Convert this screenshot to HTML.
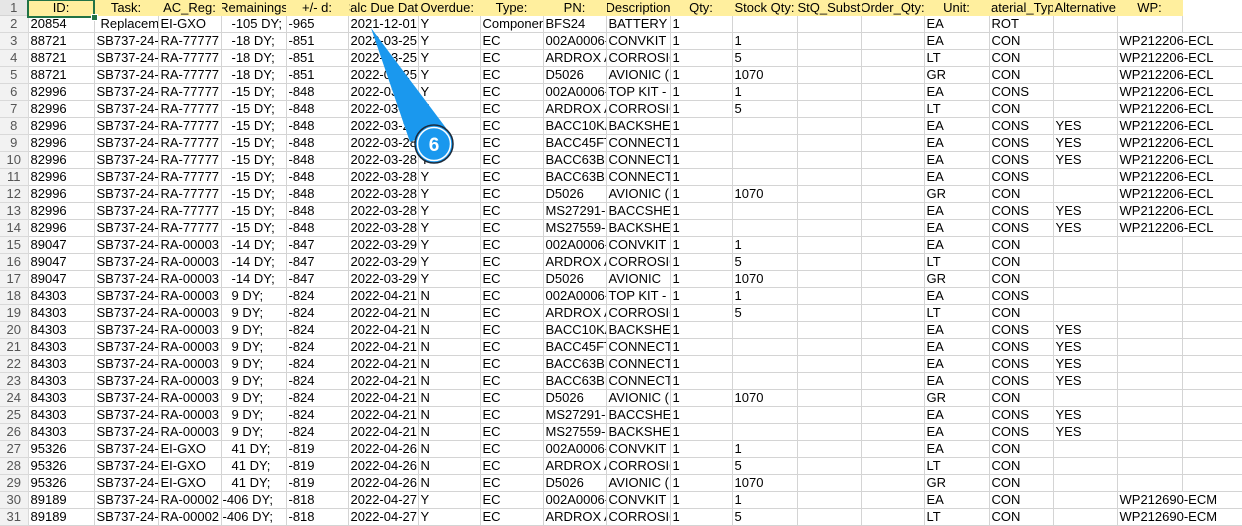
<!DOCTYPE html>
<html><head><meta charset="utf-8"><style>
html,body{margin:0;padding:0;background:#fff;width:1242px;height:526px;overflow:hidden}
table{border-collapse:collapse;table-layout:fixed;width:1242px;font:13px "Liberation Sans",Arial,sans-serif;color:#000;position:absolute;left:0;top:0}
td{height:16px;line-height:16px;padding:0 0 0 2px;border-right:1px solid #d4d4d4;border-bottom:1px solid #d4d4d4;white-space:nowrap;overflow:hidden;text-overflow:clip}
td.n{background:#f2f2f2;color:#555;text-align:center;padding:0;border-color:#d9d9d9}
tr.h td{background:#ffef9e;border-color:#ffef9e;height:15px;line-height:15px;padding:0}
tr.h td.n{background:#e6e6e6;border-color:#d4d4d4}
tr.h td.w{background:#fff;border-color:#fff}
.c{display:flex;justify-content:center;overflow:hidden;white-space:nowrap}
.p{padding-left:10px}
.sel{position:absolute;left:27px;top:-1px;width:64px;height:15px;border:2px solid #217346}
.sel:after{content:"";position:absolute;right:-5px;bottom:-5px;width:5px;height:5px;background:#217346;border:1px solid #fff}
</style></head><body>
<table>
<colgroup><col style="width:28px"><col style="width:66px"><col style="width:64px"><col style="width:63px"><col style="width:65px"><col style="width:62px"><col style="width:70px"><col style="width:62px"><col style="width:63px"><col style="width:63px"><col style="width:64px"><col style="width:62px"><col style="width:65px"><col style="width:64px"><col style="width:63px"><col style="width:65px"><col style="width:64px"><col style="width:64px"><col style="width:65px"><col style="width:60px"></colgroup>
<tr class="h"><td class="n">1</td><td><div class="c">ID:</div></td><td><div class="c">Task:</div></td><td><div class="c">AC_Reg:</div></td><td><div class="c">Remainings</div></td><td><div class="c">+/- d:</div></td><td><div class="c">Calc Due Date</div></td><td style="padding-left:2px">Overdue:</td><td><div class="c">Type:</div></td><td><div class="c">PN:</div></td><td><div class="c">Description</div></td><td><div class="c">Qty:</div></td><td style="padding-left:2px">Stock Qty:</td><td style="padding-left:0">StQ_Subst</td><td><div class="c">Order_Qty:</div></td><td><div class="c">Unit:</div></td><td><div class="c">Material_Type</div></td><td style="padding-left:1px">Alternative:</td><td><div class="c">WP:</div></td><td class="w"></td></tr>
<tr><td class="n">2</td><td>20854</td><td style="padding-left:6px">Replacement</td><td>EI-GXO</td><td class="p">-105 DY;</td><td>-965</td><td>2021-12-01</td><td>Y</td><td>Component</td><td>BFS24</td><td>BATTERY</td><td>1</td><td></td><td></td><td></td><td>EA</td><td>ROT</td><td></td><td></td><td></td></tr>
<tr><td class="n">3</td><td>88721</td><td>SB737-24-</td><td>RA-77777</td><td class="p">-18 DY;</td><td>-851</td><td>2022-03-25</td><td>Y</td><td>EC</td><td>002A0006-</td><td>CONVKIT</td><td>1</td><td>1</td><td></td><td></td><td>EA</td><td>CON</td><td></td><td colspan="2">WP212206-ECL</td></tr>
<tr><td class="n">4</td><td>88721</td><td>SB737-24-</td><td>RA-77777</td><td class="p">-18 DY;</td><td>-851</td><td>2022-03-25</td><td>Y</td><td>EC</td><td>ARDROX A</td><td>CORROSIO</td><td>1</td><td>5</td><td></td><td></td><td>LT</td><td>CON</td><td></td><td colspan="2">WP212206-ECL</td></tr>
<tr><td class="n">5</td><td>88721</td><td>SB737-24-</td><td>RA-77777</td><td class="p">-18 DY;</td><td>-851</td><td>2022-03-25</td><td>Y</td><td>EC</td><td>D5026</td><td>AVIONIC (</td><td>1</td><td>1070</td><td></td><td></td><td>GR</td><td>CON</td><td></td><td colspan="2">WP212206-ECL</td></tr>
<tr><td class="n">6</td><td>82996</td><td>SB737-24-</td><td>RA-77777</td><td class="p">-15 DY;</td><td>-848</td><td>2022-03-28</td><td>Y</td><td>EC</td><td>002A0006-</td><td>TOP KIT -</td><td>1</td><td>1</td><td></td><td></td><td>EA</td><td>CONS</td><td></td><td colspan="2">WP212206-ECL</td></tr>
<tr><td class="n">7</td><td>82996</td><td>SB737-24-</td><td>RA-77777</td><td class="p">-15 DY;</td><td>-848</td><td>2022-03-28</td><td>Y</td><td>EC</td><td>ARDROX A</td><td>CORROSIO</td><td>1</td><td>5</td><td></td><td></td><td>LT</td><td>CON</td><td></td><td colspan="2">WP212206-ECL</td></tr>
<tr><td class="n">8</td><td>82996</td><td>SB737-24-</td><td>RA-77777</td><td class="p">-15 DY;</td><td>-848</td><td>2022-03-28</td><td>Y</td><td>EC</td><td>BACC10KA</td><td>BACKSHE</td><td>1</td><td></td><td></td><td></td><td>EA</td><td>CONS</td><td>YES</td><td colspan="2">WP212206-ECL</td></tr>
<tr><td class="n">9</td><td>82996</td><td>SB737-24-</td><td>RA-77777</td><td class="p">-15 DY;</td><td>-848</td><td>2022-03-28</td><td>Y</td><td>EC</td><td>BACC45FT</td><td>CONNECT</td><td>1</td><td></td><td></td><td></td><td>EA</td><td>CONS</td><td>YES</td><td colspan="2">WP212206-ECL</td></tr>
<tr><td class="n">10</td><td>82996</td><td>SB737-24-</td><td>RA-77777</td><td class="p">-15 DY;</td><td>-848</td><td>2022-03-28</td><td>Y</td><td>EC</td><td>BACC63BI</td><td>CONNECT</td><td>1</td><td></td><td></td><td></td><td>EA</td><td>CONS</td><td>YES</td><td colspan="2">WP212206-ECL</td></tr>
<tr><td class="n">11</td><td>82996</td><td>SB737-24-</td><td>RA-77777</td><td class="p">-15 DY;</td><td>-848</td><td>2022-03-28</td><td>Y</td><td>EC</td><td>BACC63BI</td><td>CONNECT</td><td>1</td><td></td><td></td><td></td><td>EA</td><td>CONS</td><td></td><td colspan="2">WP212206-ECL</td></tr>
<tr><td class="n">12</td><td>82996</td><td>SB737-24-</td><td>RA-77777</td><td class="p">-15 DY;</td><td>-848</td><td>2022-03-28</td><td>Y</td><td>EC</td><td>D5026</td><td>AVIONIC (</td><td>1</td><td>1070</td><td></td><td></td><td>GR</td><td>CON</td><td></td><td colspan="2">WP212206-ECL</td></tr>
<tr><td class="n">13</td><td>82996</td><td>SB737-24-</td><td>RA-77777</td><td class="p">-15 DY;</td><td>-848</td><td>2022-03-28</td><td>Y</td><td>EC</td><td>MS27291-</td><td>BACCSHE</td><td>1</td><td></td><td></td><td></td><td>EA</td><td>CONS</td><td>YES</td><td colspan="2">WP212206-ECL</td></tr>
<tr><td class="n">14</td><td>82996</td><td>SB737-24-</td><td>RA-77777</td><td class="p">-15 DY;</td><td>-848</td><td>2022-03-28</td><td>Y</td><td>EC</td><td>MS27559-</td><td>BACKSHE</td><td>1</td><td></td><td></td><td></td><td>EA</td><td>CONS</td><td>YES</td><td colspan="2">WP212206-ECL</td></tr>
<tr><td class="n">15</td><td>89047</td><td>SB737-24-</td><td>RA-00003</td><td class="p">-14 DY;</td><td>-847</td><td>2022-03-29</td><td>Y</td><td>EC</td><td>002A0006-</td><td>CONVKIT</td><td>1</td><td>1</td><td></td><td></td><td>EA</td><td>CON</td><td></td><td></td><td></td></tr>
<tr><td class="n">16</td><td>89047</td><td>SB737-24-</td><td>RA-00003</td><td class="p">-14 DY;</td><td>-847</td><td>2022-03-29</td><td>Y</td><td>EC</td><td>ARDROX A</td><td>CORROSIO</td><td>1</td><td>5</td><td></td><td></td><td>LT</td><td>CON</td><td></td><td></td><td></td></tr>
<tr><td class="n">17</td><td>89047</td><td>SB737-24-</td><td>RA-00003</td><td class="p">-14 DY;</td><td>-847</td><td>2022-03-29</td><td>Y</td><td>EC</td><td>D5026</td><td>AVIONIC</td><td>1</td><td>1070</td><td></td><td></td><td>GR</td><td>CON</td><td></td><td></td><td></td></tr>
<tr><td class="n">18</td><td>84303</td><td>SB737-24-</td><td>RA-00003</td><td class="p">9 DY;</td><td>-824</td><td>2022-04-21</td><td>N</td><td>EC</td><td>002A0006-</td><td>TOP KIT -</td><td>1</td><td>1</td><td></td><td></td><td>EA</td><td>CONS</td><td></td><td></td><td></td></tr>
<tr><td class="n">19</td><td>84303</td><td>SB737-24-</td><td>RA-00003</td><td class="p">9 DY;</td><td>-824</td><td>2022-04-21</td><td>N</td><td>EC</td><td>ARDROX A</td><td>CORROSIO</td><td>1</td><td>5</td><td></td><td></td><td>LT</td><td>CON</td><td></td><td></td><td></td></tr>
<tr><td class="n">20</td><td>84303</td><td>SB737-24-</td><td>RA-00003</td><td class="p">9 DY;</td><td>-824</td><td>2022-04-21</td><td>N</td><td>EC</td><td>BACC10KA</td><td>BACKSHE</td><td>1</td><td></td><td></td><td></td><td>EA</td><td>CONS</td><td>YES</td><td></td><td></td></tr>
<tr><td class="n">21</td><td>84303</td><td>SB737-24-</td><td>RA-00003</td><td class="p">9 DY;</td><td>-824</td><td>2022-04-21</td><td>N</td><td>EC</td><td>BACC45FT</td><td>CONNECT</td><td>1</td><td></td><td></td><td></td><td>EA</td><td>CONS</td><td>YES</td><td></td><td></td></tr>
<tr><td class="n">22</td><td>84303</td><td>SB737-24-</td><td>RA-00003</td><td class="p">9 DY;</td><td>-824</td><td>2022-04-21</td><td>N</td><td>EC</td><td>BACC63BI</td><td>CONNECT</td><td>1</td><td></td><td></td><td></td><td>EA</td><td>CONS</td><td>YES</td><td></td><td></td></tr>
<tr><td class="n">23</td><td>84303</td><td>SB737-24-</td><td>RA-00003</td><td class="p">9 DY;</td><td>-824</td><td>2022-04-21</td><td>N</td><td>EC</td><td>BACC63BI</td><td>CONNECT</td><td>1</td><td></td><td></td><td></td><td>EA</td><td>CONS</td><td>YES</td><td></td><td></td></tr>
<tr><td class="n">24</td><td>84303</td><td>SB737-24-</td><td>RA-00003</td><td class="p">9 DY;</td><td>-824</td><td>2022-04-21</td><td>N</td><td>EC</td><td>D5026</td><td>AVIONIC (</td><td>1</td><td>1070</td><td></td><td></td><td>GR</td><td>CON</td><td></td><td></td><td></td></tr>
<tr><td class="n">25</td><td>84303</td><td>SB737-24-</td><td>RA-00003</td><td class="p">9 DY;</td><td>-824</td><td>2022-04-21</td><td>N</td><td>EC</td><td>MS27291-</td><td>BACCSHE</td><td>1</td><td></td><td></td><td></td><td>EA</td><td>CONS</td><td>YES</td><td></td><td></td></tr>
<tr><td class="n">26</td><td>84303</td><td>SB737-24-</td><td>RA-00003</td><td class="p">9 DY;</td><td>-824</td><td>2022-04-21</td><td>N</td><td>EC</td><td>MS27559-</td><td>BACKSHE</td><td>1</td><td></td><td></td><td></td><td>EA</td><td>CONS</td><td>YES</td><td></td><td></td></tr>
<tr><td class="n">27</td><td>95326</td><td>SB737-24-</td><td>EI-GXO</td><td class="p">41 DY;</td><td>-819</td><td>2022-04-26</td><td>N</td><td>EC</td><td>002A0006-</td><td>CONVKIT</td><td>1</td><td>1</td><td></td><td></td><td>EA</td><td>CON</td><td></td><td></td><td></td></tr>
<tr><td class="n">28</td><td>95326</td><td>SB737-24-</td><td>EI-GXO</td><td class="p">41 DY;</td><td>-819</td><td>2022-04-26</td><td>N</td><td>EC</td><td>ARDROX A</td><td>CORROSIO</td><td>1</td><td>5</td><td></td><td></td><td>LT</td><td>CON</td><td></td><td></td><td></td></tr>
<tr><td class="n">29</td><td>95326</td><td>SB737-24-</td><td>EI-GXO</td><td class="p">41 DY;</td><td>-819</td><td>2022-04-26</td><td>N</td><td>EC</td><td>D5026</td><td>AVIONIC (</td><td>1</td><td>1070</td><td></td><td></td><td>GR</td><td>CON</td><td></td><td></td><td></td></tr>
<tr><td class="n">30</td><td>89189</td><td>SB737-24-</td><td>RA-00002</td><td style="padding-left:1px">-406 DY;</td><td>-818</td><td>2022-04-27</td><td>Y</td><td>EC</td><td>002A0006-</td><td>CONVKIT</td><td>1</td><td>1</td><td></td><td></td><td>EA</td><td>CON</td><td></td><td colspan="2">WP212690-ECM</td></tr>
<tr><td class="n">31</td><td>89189</td><td>SB737-24-</td><td>RA-00002</td><td style="padding-left:1px">-406 DY;</td><td>-818</td><td>2022-04-27</td><td>Y</td><td>EC</td><td>ARDROX A</td><td>CORROSIO</td><td>1</td><td>5</td><td></td><td></td><td>LT</td><td>CON</td><td></td><td colspan="2">WP212690-ECM</td></tr>
</table>
<div class="sel"></div>
<svg width="1242" height="526" style="position:absolute;left:0;top:0">
<polygon points="371,28 446,128 410,142" fill="#1a98ee"/>
<circle cx="434" cy="144" r="19" fill="#1a98ee" stroke="#1c2a3a" stroke-width="1.5"/>
<circle cx="434" cy="144" r="16.5" fill="none" stroke="#fff" stroke-width="1.5"/>
<text x="434" y="151" text-anchor="middle" font-family="Liberation Sans,sans-serif" font-weight="bold" font-size="19" fill="#fff">6</text>
</svg>
</body></html>
